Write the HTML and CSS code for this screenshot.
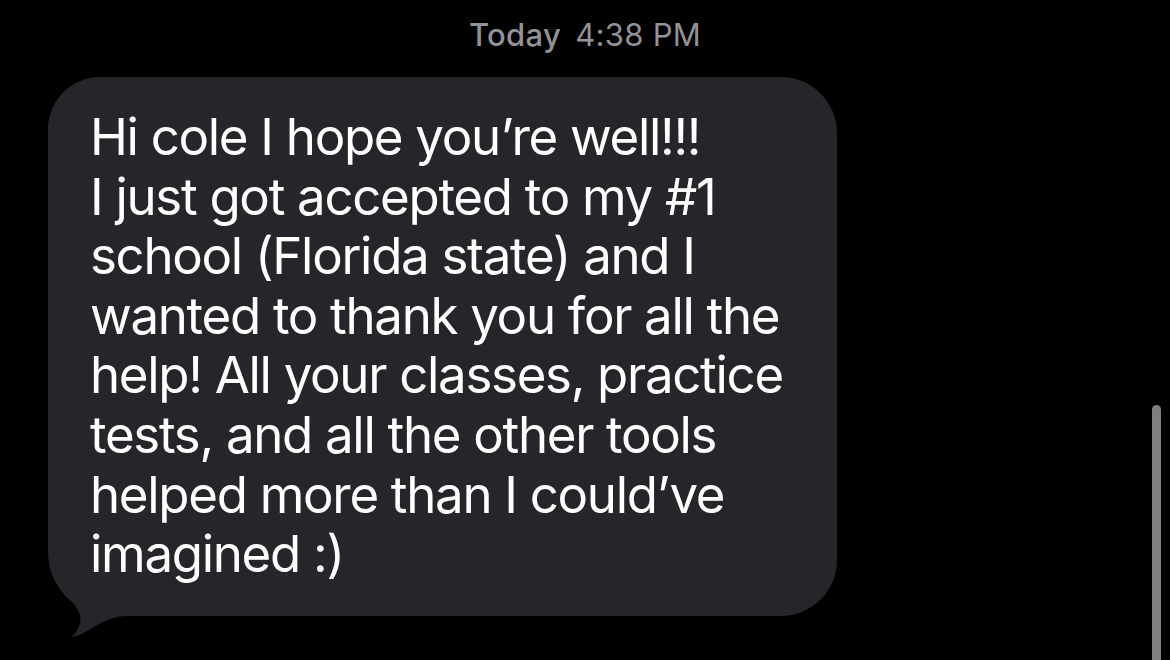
FILE: index.html
```html
<!DOCTYPE html>
<html lang="en">
<head>
<meta charset="utf-8">
<title>Message</title>
<link rel="stylesheet" href="styles.css">
</head>
<body>
<div class="screen">
  <div class="stamp"><span class="day">Today</span> <span class="time">4:38 PM</span></div>
  <div class="row">
    <div class="bubble">
      <p class="msg">Hi cole I hope you’re well!!!<br>I just got accepted to my #1<br>school (Florida state) and I<br>wanted to thank you for all the<br>help! All your classes, practice<br>tests, and all the other tools<br>helped more than I could’ve<br>imagined :)</p>
      <svg class="tail" width="80" height="44" viewBox="0 0 80 44" aria-hidden="true">
        <path d="M22,0 L25,7 C30,13 34,20 32,27 C31,33 27,38 23,41 C40,40 52,20 80,20 L80,0 Z" fill="#262529"/>
      </svg>
    </div>
  </div>
  <div class="scrollbar"></div>
</div>
</body>
</html>
```
FILE: styles.css
```css
html, body {
  margin: 0;
  padding: 0;
  background: #000;
}

.screen {
  position: relative;
  width: 1170px;
  height: 660px;
  overflow: hidden;
  background: #000;
  font-family: "Inter", "Roboto", "Liberation Sans", sans-serif;
}

.stamp {
  padding-top: 18px;
  height: 34px;
  line-height: 34px;
  font-size: 31px;
  letter-spacing: 0.3px;
  text-align: center;
  color: #929297;
}

.day {
  font-weight: 500;
}

.time {
  font-weight: 400;
  margin-left: 5px;
}

.row {
  display: flex;
  padding-top: 25px;
  padding-left: 48px;
}

.bubble {
  position: relative;
  box-sizing: border-box;
  width: 789px;
  padding: 30px 20px 32px 42px;
  background: #262529;
  border-radius: 52px 56px 56px 64px;
}

.msg {
  margin: 0;
  color: #fff;
  font-size: 51px;
  line-height: 59.6px;
  letter-spacing: -1.3px;
  font-weight: 400;
  white-space: nowrap;
}

.tail {
  position: absolute;
  left: 0;
  bottom: -24px;
  display: block;
}

.scrollbar {
  position: absolute;
  left: 1152px;
  top: 405px;
  width: 9px;
  height: 270px;
  border-radius: 5px;
  background: #7f7f7f;
}
```
